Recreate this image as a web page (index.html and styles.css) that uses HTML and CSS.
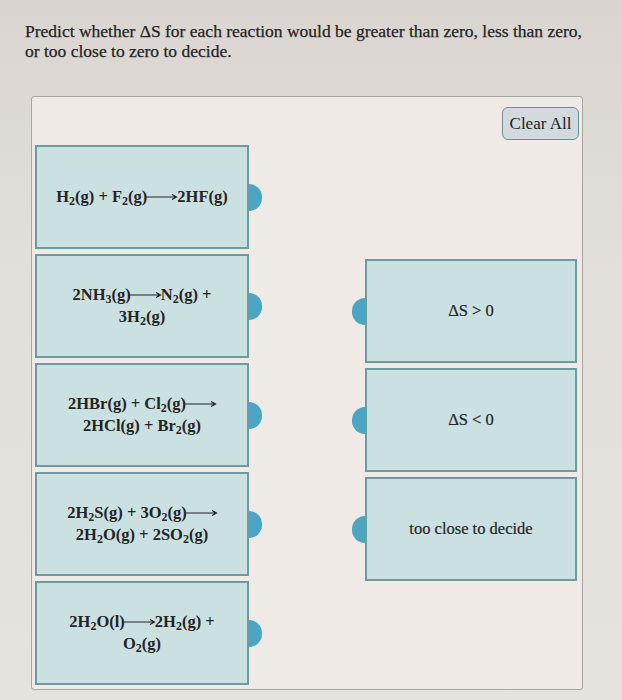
FILE: index.html
```html
<!DOCTYPE html>
<html lang="en">
<head>
<meta charset="utf-8">
<title>Entropy sorting</title>
<link rel="stylesheet" href="styles.css">
</head>
<body>
<p class="prompt">Predict whether &Delta;S for each reaction would be greater than zero, less than zero, or too close to zero to decide.</p>

<div class="board">
  <div class="toolbar">
    <button class="clear-btn" type="button">Clear All</button>
  </div>
  <div class="columns">
    <div class="col col-items">
      <div class="slot">
        <div class="card eq"><span class="label">H<sub>2</sub>(g) + F<sub>2</sub>(g)<svg class="arrow" viewBox="0 0 32 8" width="32" height="8"><path d="M0 4H30M26 1.5L30.5 4L26 6.5" fill="none" stroke="#222" stroke-width="1.2"/></svg>2HF(g)</span></div>
        <span class="tab-out"></span>
      </div>
      <div class="slot">
        <div class="card eq"><span class="label">2NH<sub>3</sub>(g)<svg class="arrow" viewBox="0 0 32 8" width="32" height="8"><path d="M0 4H30M26 1.5L30.5 4L26 6.5" fill="none" stroke="#222" stroke-width="1.2"/></svg>N<sub>2</sub>(g) +<br>3H<sub>2</sub>(g)</span></div>
        <span class="tab-out"></span>
      </div>
      <div class="slot">
        <div class="card eq"><span class="label">2HBr(g) + Cl<sub>2</sub>(g)<svg class="arrow" viewBox="0 0 32 8" width="32" height="8"><path d="M0 4H30M26 1.5L30.5 4L26 6.5" fill="none" stroke="#222" stroke-width="1.2"/></svg><br>2HCl(g) + Br<sub>2</sub>(g)</span></div>
        <span class="tab-out"></span>
      </div>
      <div class="slot">
        <div class="card eq"><span class="label">2H<sub>2</sub>S(g) + 3O<sub>2</sub>(g)<svg class="arrow" viewBox="0 0 32 8" width="32" height="8"><path d="M0 4H30M26 1.5L30.5 4L26 6.5" fill="none" stroke="#222" stroke-width="1.2"/></svg><br>2H<sub>2</sub>O(g) + 2SO<sub>2</sub>(g)</span></div>
        <span class="tab-out"></span>
      </div>
      <div class="slot">
        <div class="card eq"><span class="label">2H<sub>2</sub>O(l)<svg class="arrow" viewBox="0 0 32 8" width="32" height="8"><path d="M0 4H30M26 1.5L30.5 4L26 6.5" fill="none" stroke="#222" stroke-width="1.2"/></svg>2H<sub>2</sub>(g) +<br>O<sub>2</sub>(g)</span></div>
        <span class="tab-out"></span>
      </div>
    </div>

    <div class="col col-targets">
      <div class="slot">
        <span class="tab-in"></span>
        <div class="card target"><span class="label">&Delta;S &gt; 0</span></div>
      </div>
      <div class="slot">
        <span class="tab-in"></span>
        <div class="card target"><span class="label">&Delta;S &lt; 0</span></div>
      </div>
      <div class="slot">
        <span class="tab-in"></span>
        <div class="card target"><span class="label">too close to decide</span></div>
      </div>
    </div>
  </div>
</div>
</body>
</html>
```

FILE: styles.css
```css
html, body {
  margin: 0;
  padding: 0;
}

body {
  width: 622px;
  height: 700px;
  overflow: hidden;
  font-family: "Liberation Serif", "Times New Roman", serif;
  color: #1f1f1f;
  background: linear-gradient(180deg, #dad5d1 0%, #e3dfdb 40%, #e6e3df 100%);
}

.prompt {
  margin: 0;
  padding: 21px 30px 0 25px;
  width: 570px;
  font-size: 17.5px;
  line-height: 20px;
  color: #232323;
  -webkit-text-stroke: 0.25px #232323;
}

.board {
  margin: 35px 0 0 31px;
  width: 552px;
  height: 594px;
  box-sizing: border-box;
  border: 1.5px solid #aaa5a2;
  border-radius: 3px;
  background: #efeae6;
  padding: 10px 3px 0 3px;
}

.toolbar {
  display: flex;
  justify-content: flex-end;
}

.clear-btn {
  font-family: "Liberation Serif", "Times New Roman", serif;
  font-size: 17px;
  color: #222;
  background: #d3dade;
  border: 1.5px solid #6f8e96;
  border-radius: 6px;
  width: 77px;
  height: 33px;
  padding: 0;
}

.columns {
  display: flex;
  margin-top: 5px;
}

.col {
  display: flex;
  flex-direction: column;
  gap: 5px;
}

.col-items {
  width: 228px;
}

.col-targets {
  margin-left: 89px;
  margin-top: 114px;
}

.slot {
  display: flex;
  align-items: center;
}

.card {
  box-sizing: border-box;
  height: 104px;
  background: #cbe0e1;
  border: 2px solid #6f9aa0;
  display: flex;
  align-items: center;
  justify-content: center;
  text-align: center;
  font-size: 16.5px;
  line-height: 22px;
}

.label {
  display: block;
}

.eq {
  width: 214px;
  font-weight: bold;
  color: #242424;
}

.eq sub {
  font-size: 12px;
  line-height: 0;
  vertical-align: -3px;
}

.arrow {
  display: inline-block;
  vertical-align: 1px;
  margin: 0 -1px;
}

.target {
  width: 212px;
  height: 104px;
  color: #252525;
  font-size: 16.5px;
  -webkit-text-stroke: 0.2px #252525;
}

.tab-out,
.tab-in {
  display: block;
  width: 13px;
  height: 27px;
  background: #4aa6c3;
  flex: none;
}

.tab-out {
  border-radius: 0 14px 14px 0;
}

.tab-in {
  border-radius: 14px 0 0 14px;
}
```
